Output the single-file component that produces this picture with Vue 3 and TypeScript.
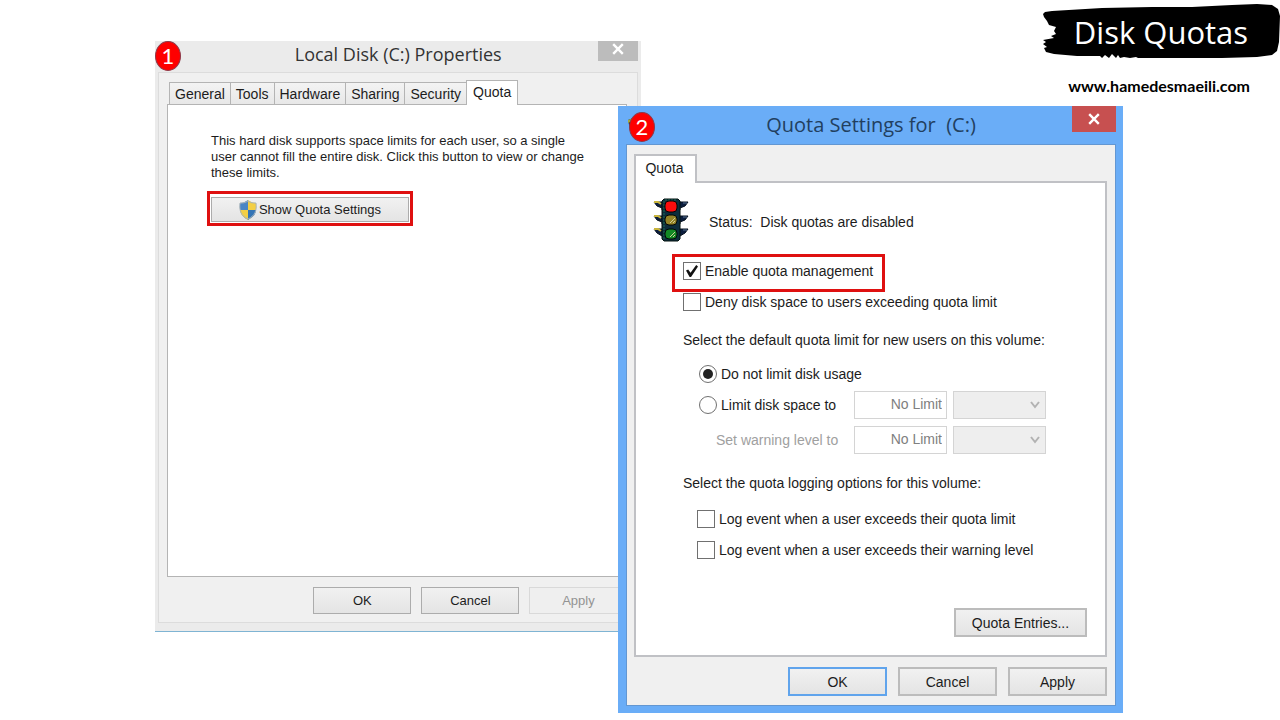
<script setup lang="ts">
import { ref } from 'vue'

const propertyTabs = ['General', 'Tools', 'Hardware', 'Sharing', 'Security', 'Quota']
const activeTab = ref('Quota')

const enableQuota = ref(true)
const denySpace = ref(false)
const limitMode = ref<'none' | 'limit'>('none')
const diskLimit = ref('No Limit')
const warningLimit = ref('No Limit')
const logQuota = ref(false)
const logWarning = ref(false)
</script>

<template>
  <main class="desktop">
    <header class="brand">
      <div class="brush">
        <svg class="brush-shape" viewBox="0 0 238 56" preserveAspectRatio="none" aria-hidden="true">
          <path d="M1 10 L3 8 L10 7 L60 4 L110 3 L150 3 L190 1 L215 0 L230 1 L236 5 L238 12 L237 38 L235 47 L230 51 L215 53 L180 54 L120 54 L96 54 L94 53 L88 54 L82 53 L78 54 L76 51 L74 54 L70 50 L67 54 L63 51 L60 54 L58 52 L35 52 L12 50 L4 48 L2 44 L5 43 L1 40 L4 38 L1 36 L12 34 L9 32 L14 30 L12 27 L14 23 L7 21 L5 17 L2 13 Z" />
        </svg>
        <h1>Disk Quotas</h1>
      </div>
      <a class="site" href="#">www.hamedesmaeili.com</a>
    </header>

    <section class="window properties" aria-label="Local Disk (C:) Properties">
      <span class="badge first">1</span>
      <div class="titlebar">
        <h2>Local Disk (C:) Properties</h2>
        <button class="close" type="button" aria-label="Close">
          <svg viewBox="0 0 10 10"><path d="M1 1 L9 9 M9 1 L1 9" /></svg>
        </button>
      </div>
      <div class="frame">
        <div class="tabs" role="tablist">
          <button
            v-for="tab in propertyTabs"
            :key="tab"
            type="button"
            role="tab"
            class="tab"
            :class="{ active: tab === activeTab }"
            :aria-selected="tab === activeTab"
            @click="activeTab = tab"
          >{{ tab }}</button>
        </div>
        <div class="panel">
          <p>This hard disk supports space limits for each user, so a single user cannot fill the entire disk. Click this button to view or change these limits.</p>
          <div class="highlight">
            <button class="push show" type="button">
              <svg class="shield" viewBox="0 0 18 20" aria-hidden="true">
                <path d="M9 0 C6 2 4 3 1 3 C0 10 2 16 9 20 Z" fill="#4a86c5" />
                <path d="M9 0 C12 2 14 3 17 3 C18 10 16 16 9 20 Z" fill="#f3cf45" />
                <path d="M1 10 H9 V20 C4 17 1 14 1 10 Z" fill="#f3cf45" />
                <path d="M9 10 H17 C17 14 14 17 9 20 Z" fill="#3474b5" />
                <path d="M9 1 C6 3 4 3 1 3 C0 10 2 16 9 19 C16 16 18 10 17 3 C14 3 12 3 9 1 Z" fill="none" stroke="#a9b4ba" />
              </svg>
              Show Quota Settings
            </button>
          </div>
        </div>
        <div class="actions">
          <button class="push" type="button">OK</button>
          <button class="push" type="button">Cancel</button>
          <button class="push" type="button" disabled>Apply</button>
        </div>
      </div>
    </section>

    <section class="window settings" aria-label="Quota Settings for (C:)">
      <svg class="app-icon" viewBox="0 0 8 14" aria-hidden="true">
        <path d="M0 3 L8 0 V14 L2 12 Z" fill="#17251c" />
        <path d="M0 3 L5 1 V4 L0 6 Z" fill="#a5a73c" />
      </svg>
      <span class="badge second">2</span>
      <div class="titlebar">
        <h2>Quota Settings for&nbsp; (C:)</h2>
        <button class="close" type="button" aria-label="Close">
          <svg viewBox="0 0 10 10"><path d="M1 1 L9 9 M9 1 L1 9" /></svg>
        </button>
      </div>
      <div class="frame">
        <div class="tabs" role="tablist">
          <button class="tab active" type="button" role="tab" aria-selected="true">Quota</button>
        </div>
        <div class="panel">
          <div class="status">
            <svg class="light" viewBox="0 0 36 44" aria-hidden="true">
              <g fill="#0b1d3e" stroke="#06111f" stroke-width="1">
                <path d="M1 4 H35 L32 8 L27 10 V12 H9 V10 L4 8 Z" />
                <path d="M1 18 H35 L32 22 L27 24 V26 H9 V24 L4 22 Z" />
                <path d="M1 31 H35 L32 35 L27 38 H9 L4 35 Z" />
              </g>
              <path d="M11 1 H25 L27 3 V41 L25 43 H11 L9 41 V3 Z" fill="#0d2d3c" stroke="#04130f" />
              <path d="M11 3 V41 M12 2 H23" stroke="#1d6b55" stroke-dasharray="2 1" />
              <path d="M1 4 H5 L8 6 M1 18 H5 L8 20 M1 31 H5 L8 33" fill="none" stroke="#c9b53c" stroke-width="2" />
              <path d="M30 5 H34 M30 19 H34 M30 32 H34" stroke="#56718e" />
              <g stroke="#020705">
                <rect x="12" y="3" width="12" height="11" rx="4" fill="#fb0d0d" />
                <rect x="12" y="17" width="12" height="10" rx="4" fill="#938326" />
                <rect x="12" y="31" width="12" height="10" rx="4" fill="#138a25" />
              </g>
              <path d="M17 25 L22 20 M20 25 L22 23 M17 39 L22 34 M20 39 L22 37" stroke="#d0cc97" />
            </svg>
            <span>Status:&nbsp; Disk quotas are disabled</span>
          </div>
          <div class="highlight">
            <label class="option"><input v-model="enableQuota" type="checkbox" />Enable quota management</label>
          </div>
          <label class="option deny"><input v-model="denySpace" type="checkbox" />Deny disk space to users exceeding quota limit</label>
          <p class="caption">Select the default quota limit for new users on this volume:</p>
          <label class="option unlimited"><input v-model="limitMode" type="radio" name="limit" value="none" />Do not limit disk usage</label>
          <div class="limits">
            <label class="option"><input v-model="limitMode" type="radio" name="limit" value="limit" />Limit disk space to</label>
            <input v-model="diskLimit" class="amount" type="text" aria-label="Disk space limit" disabled />
            <span class="unit"><select aria-label="Disk space unit" disabled></select><svg viewBox="0 0 12 8" aria-hidden="true"><path d="M2 1 L6 6 L10 1" /></svg></span>
            <label class="warning" for="warning-level">Set warning level to</label>
            <input id="warning-level" v-model="warningLimit" class="amount" type="text" disabled />
            <span class="unit"><select aria-label="Warning level unit" disabled></select><svg viewBox="0 0 12 8" aria-hidden="true"><path d="M2 1 L6 6 L10 1" /></svg></span>
          </div>
          <p class="caption">Select the quota logging options for this volume:</p>
          <div class="logging">
            <label class="option"><input v-model="logQuota" type="checkbox" />Log event when a user exceeds their quota limit</label>
            <label class="option"><input v-model="logWarning" type="checkbox" />Log event when a user exceeds their warning level</label>
          </div>
          <button class="push entries" type="button">Quota Entries...</button>
        </div>
        <div class="actions">
          <button class="push default" type="button">OK</button>
          <button class="push" type="button">Cancel</button>
          <button class="push" type="button">Apply</button>
        </div>
      </div>
    </section>
  </main>
</template>

<style>
body {
  background: #fff;
}
</style>

<style scoped>
.desktop {
  position: relative;
  min-height: 100vh;
  min-width: 1120px;
  overflow: hidden;
  font-family: "Liberation Sans", Arial, sans-serif;
  color: #1c1c1c;
}
*,
*::before,
*::after {
  box-sizing: border-box;
}
h1,
h2,
p {
  margin: 0;
  font-weight: 400;
}
button,
input,
select {
  font: inherit;
  color: inherit;
  margin: 0;
  border-radius: 0;
}

.brand {
  display: flex;
  flex-direction: column;
  align-items: flex-end;
  padding-top: 4px;
}
.brush {
  display: grid;
  width: 238px;
  height: 56px;
}
.brush > * {
  grid-area: 1 / 1;
}
.brush-shape {
  width: 100%;
  height: 100%;
}
.brush h1 {
  place-self: center;
  color: #fff;
  font: 31px/40px "Open Sans", sans-serif;
}
.site {
  margin: 16px 30px 0 0;
  color: #000;
  font: bold 16px/20px Lato, sans-serif;
  text-decoration: none;
}

.window {
  position: absolute;
  display: flex;
  flex-direction: column;
}
.titlebar {
  position: relative;
  display: flex;
  justify-content: center;
}
.titlebar h2 {
  font-family: "Open Sans", sans-serif;
  color: #333;
}
.close {
  position: absolute;
  top: 0;
  right: 0;
  padding: 0;
  border: 0;
  display: grid;
  place-items: center;
}
.close svg {
  width: 12px;
  height: 12px;
  fill: none;
  stroke: #fff;
  stroke-width: 2;
}
.badge {
  position: absolute;
  z-index: 1;
  width: 26px;
  height: 30px;
  border: 1px solid #8c3a4a;
  border-radius: 50%;
  background: #fe0000;
  color: #fff;
  font: 22px/28px Lato, sans-serif;
  text-align: center;
}
.badge.first {
  top: 0;
  left: 0;
}
.badge.second {
  top: 6px;
  left: 11px;
}
.frame {
  display: flex;
  flex-direction: column;
  flex: 1;
  background: #f0f0f0;
}
.tabs {
  display: flex;
  align-items: flex-end;
}
.tab {
  border: 1px solid #b4b4b4;
  background: linear-gradient(#f3f3f3, #e8e8e8);
  text-align: center;
}
.tab.active {
  position: relative;
  background: #fff;
  border-bottom: 0;
}
.panel {
  background: #fff;
  display: flex;
  flex-direction: column;
  align-items: flex-start;
}
.highlight {
  border: 3px solid #df1010;
}
.push {
  display: flex;
  align-items: center;
  justify-content: center;
  padding: 0;
  border: 1px solid #acacac;
  background: linear-gradient(#f1f1f1, #e4e4e4);
}
.actions {
  display: flex;
  justify-content: flex-end;
}

/* Local disk properties */
.properties {
  top: 41px;
  left: 155px;
  width: 38%;
  padding: 0 3px 8px;
  background: #ebebeb;
  border-bottom: 1px solid #7fb4d3;
  font-size: 13px;
  line-height: 16px;
}
.properties .titlebar {
  height: 31px;
}
.properties .titlebar h2 {
  font-size: 18px;
  line-height: 26px;
}
.properties .close {
  width: 40px;
  height: 20px;
  background: #bcbcbc;
}
.properties .close svg {
  margin-bottom: 4px;
}
.properties .frame {
  padding: 7px 10px 8px 8px;
  border: 1px solid #dcdcdc;
}
.properties .tabs {
  padding-left: 2px;
  height: 24px;
  font-size: 14px;
}
.properties .tab {
  height: 22px;
  padding: 0 5px;
  border-right: 0;
  border-bottom: 0;
}
.properties .tab.active {
  height: 25px;
  margin-bottom: -1px;
  padding: 0 6px 2px;
  border-right: 1px solid #b4b4b4;
}
.properties .panel {
  height: 473px;
  padding: 28px 40px 0 43px;
  border: 1px solid #b4b4b4;
}
.properties .highlight {
  display: flex;
  width: 206px;
  height: 35px;
  margin: 10px 0 0 -4px;
  padding: 3px 1px 1px;
}
.properties .show {
  flex: 1;
  gap: 2px;
}
.shield {
  width: 18px;
  height: 20px;
}
.properties .actions {
  gap: 10px;
  padding-top: 10px;
}
.properties .actions .push {
  width: 98px;
  height: 27px;
}
.properties .push:disabled {
  color: #939393;
  background: #efefef;
  border-color: #d9d9d9;
}

/* Quota settings */
.settings {
  top: 106px;
  left: 618px;
  width: max(505px, 39%);
  padding: 0 7px 7px 8px;
  background: #6aadf7;
  font-size: 14px;
  line-height: 20px;
}
.app-icon {
  position: absolute;
  top: 11px;
  left: 10px;
  width: 8px;
  height: 14px;
}
.settings .titlebar {
  height: 38px;
}
.settings .titlebar h2 {
  color: #22405f;
  font-size: 20px;
  line-height: 38px;
}
.settings .close {
  width: 44px;
  height: 26px;
  background: #c75050;
}
.settings .frame {
  padding: 9px 8px 9px 7px;
  border: 1px solid #6397d2;
}
.settings .tabs {
  height: 27px;
}
.settings .tab {
  height: 29px;
  width: 63px;
  margin-bottom: -2px;
  padding: 0 2px 4px 0;
  border: 2px solid #c0c1c5;
  border-bottom: 0;
}
.settings .panel {
  height: 476px;
  padding: 15px 18px 18px 47px;
  border: 2px solid #c0c1c5;
}
.status {
  display: flex;
  align-items: center;
  gap: 20px;
  height: 44px;
  margin-left: -30px;
}
.status span {
  padding-top: 4px;
}
.light {
  width: 36px;
  height: 44px;
}
.settings .highlight {
  width: 213px;
  margin: 12px 0 0 -11px;
  padding: 5px 8px 9px;
}
.option {
  display: flex;
  align-items: center;
  gap: 4px;
  height: 18px;
  white-space: nowrap;
}
.option input {
  appearance: none;
  flex: none;
  display: grid;
  place-items: center;
  width: 18px;
  height: 18px;
  border: 1px solid #707070;
  background: #fff;
}
.option input[type="radio"] {
  border-radius: 50%;
}
.option input[type="checkbox"]:checked::after {
  content: "";
  width: 12px;
  height: 12px;
  background: #111;
  clip-path: polygon(0 45%, 18% 38%, 38% 65%, 85% 0, 100% 12%, 42% 100%, 30% 100%);
}
.option input[type="radio"]:checked::after {
  content: "";
  width: 10px;
  height: 10px;
  border-radius: 50%;
  background: #222;
}
.deny {
  margin-top: 1px;
}
.caption {
  margin-top: 19px;
}
.unlimited {
  margin: 15px 0 0 16px;
}
.limits {
  display: grid;
  grid-template-columns: 149px 93px 93px;
  gap: 7px 6px;
  align-items: center;
  margin: 8px 0 0 16px;
}
.warning {
  padding-left: 17px;
  color: #a0a0a0;
  white-space: nowrap;
}
.amount {
  width: 100%;
  height: 28px;
  padding: 0 4px 2px;
  border: 1px solid #d4d4d4;
  background: #fff;
  color: #808080;
  text-align: right;
}
.unit {
  display: grid;
  height: 28px;
}
.unit > * {
  grid-area: 1 / 1;
}
.unit select {
  appearance: none;
  width: 100%;
  border: 1px solid #d4d4d4;
  background: #eee;
  opacity: 1;
}
.unit svg {
  place-self: center end;
  width: 12px;
  height: 8px;
  margin-right: 5px;
  fill: none;
  stroke: #b2b2b2;
  stroke-width: 2;
}
.logging {
  display: grid;
  gap: 13px;
  margin: 17px 0 0 14px;
}
.entries {
  width: 133px;
  height: 29px;
  margin: auto 0 0 auto;
}
.settings .push {
  border-width: 2px;
  border-color: #bcbcbc;
}
.settings .actions {
  gap: 11px;
  padding-top: 10px;
}
.settings .actions .push {
  width: 99px;
  height: 29px;
}
.settings .push.default {
  border-color: #60a4ec;
}
</style>
